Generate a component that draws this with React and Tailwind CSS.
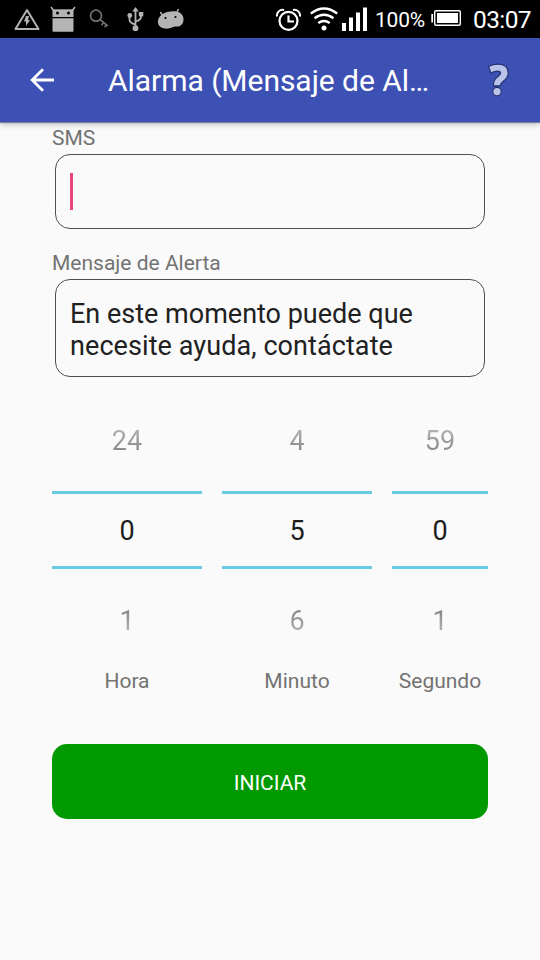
import React from "react";

function StatusBar() {
  return (
    <div className="flex h-[38px] shrink-0 items-start bg-black text-white">
      <svg className="ml-[13px] h-[38px] w-7" viewBox="13 0 28 38" fill="none">
        <path d="M27 10 38.500 29H15.500Z" stroke="#b4b4b4" strokeWidth="2" strokeLinejoin="round" />
        <path d="M26 16h3l-1 4h2l-4 6v-4.500h-2Z" fill="#b4b4b4" />
      </svg>
      <svg className="ml-2 h-[38px] w-7" viewBox="49 0 28 38" fill="none">
        <path d="m51 7 3 4M75 7l-3 4" stroke="#b4b4b4" strokeWidth="1.500" />
        <path d="M52.500 9.300h21V17h-21Z" fill="#b4b4b4" />
        <path d="M52.500 18.300h21V31a.8.800 0 0 1-.8.800H53.300a.8.800 0 0 1-.8-.8Z" fill="#b4b4b4" />
        <circle cx="57.500" cy="13" r="1.500" fill="#000" />
        <circle cx="68.500" cy="13" r="1.500" fill="#000" />
      </svg>
      <svg className="ml-2.5 h-[38px] w-6" viewBox="87 0 24 38" fill="none" stroke="#707070" strokeWidth="1.700">
        <circle cx="96" cy="15.700" r="5.500" />
        <path d="m99.800 19.400 8 6.600M103.500 22.500l-2 2.700M106.500 24.800l-1.800 2.500" />
      </svg>
      <svg className="ml-3.5 h-[38px] w-6" viewBox="125 0 24 38" fill="none" stroke="#b4b4b4" strokeWidth="1.800">
        <path d="M135.500 28V10M135.500 24.500q-6-1.500-6-5V15M135.500 21.500q5.500-1.500 5.500-4.500v-3" />
        <path d="m132.300 11.500 3.200-4.500 3.200 4.500Z" fill="#b4b4b4" stroke="none" />
        <circle cx="129.800" cy="15.500" r="2.400" fill="#b4b4b4" stroke="none" />
        <path d="M138.800 12h4.500v4.300h-4.500Z" fill="#b4b4b4" stroke="none" />
        <circle cx="135.500" cy="28.200" r="2.900" fill="#b4b4b4" stroke="none" />
      </svg>
      <svg className="ml-1.5 h-[38px] w-[30px]" viewBox="155 0 30 38" fill="none">
        <path d="m160.300 12 2.500 4M178.500 9l-2 4.500" stroke="#b4b4b4" strokeWidth="1.500" />
        <path d="M162 14.500c4-3 11-4 15.500-2.800 4 1 6 4.200 6 8 0 4.300-3 7-7 6.900-2 0-3 .2-4.500 1-3.500 1.600-8.500 1.400-11.500-.6-3.200-2.300-3-6.500-1.500-9.200.7-1.300 1.700-2.500 3-3.300Z" fill="#b4b4b4" />
        <circle cx="165.500" cy="18" r="1.100" fill="#000" />
        <circle cx="175.500" cy="17" r="1.100" fill="#000" />
      </svg>
      <svg className="ml-[90px] h-[38px] w-[27px]" viewBox="275 0 27 38" fill="none" stroke="#fff" strokeWidth="2.200">
        <circle cx="288.500" cy="20.800" r="9" />
        <path d="M288.500 15.500v6h5.500" />
        <path d="M277 16.500c-.7-4 3-7.500 7-6.500M300 16.500c.7-4-3-7.500-7-6.500" strokeWidth="1.900" />
      </svg>
      <svg className="ml-[7px] h-[38px] w-[30px]" viewBox="309 0 30 38" fill="none" stroke="#fff" strokeWidth="2.300">
        <path d="M310.800 13.500q13.200-10 26.400 0M314.500 18.300q9.500-7 19 0M318.300 23q5.700-4 11.400 0" />
        <circle cx="324" cy="28" r="2.500" fill="#fff" stroke="none" />
      </svg>
      <svg className="ml-[3px] h-[38px] w-[26px]" viewBox="342 0 26 38" fill="#fff">
        <path d="M342 23h4v8h-4ZM349 17.500h4V31h-4ZM356 12.500h4V31h-4ZM363 7.500h4V31h-4Z" />
      </svg>
      <span className="ml-[7px] w-[52px] whitespace-nowrap text-[21px] leading-[40px] tracking-[-0.2px]">100%</span>
      <svg className="ml-[3px] h-[38px] w-8" viewBox="430 0 32 38" fill="none">
        <path d="M431.300 14h1.700v8.500h-1.700Z" fill="#fff" />
        <rect x="434.700" y="10.700" width="25.600" height="14.600" rx="1.200" stroke="#fff" strokeWidth="1.400" />
        <path d="M437 13h21v10h-21Z" fill="#fff" />
      </svg>
      <span className="ml-[11px] whitespace-nowrap text-[24.5px] leading-[40px] tracking-[-0.6px]">03:07</span>
    </div>
  );
}

function Header() {
  return (
    <header className="z-10 flex h-[84px] shrink-0 items-center bg-[#3d51b4] text-white shadow-[0_1px_1px_#7b83a0,0_3px_6px_rgba(0,0,0,0.2)]">
      <svg className="ml-[29px] h-7 w-7" viewBox="0 0 28 28" fill="none" stroke="#fff" strokeWidth="2.800">
        <path d="M25 14H3.500M14 3.200 3.200 14 14 24.800" />
      </svg>
      <h1 className="ml-[51px] w-[340px] whitespace-nowrap pt-0.5 text-[30px] leading-9 tracking-[-0.04px]">Alarma (Mensaje de Al…</h1>
      <svg className="ml-[38px] h-9 w-6" viewBox="486 62 24 36" fill="#bcc3ea" stroke="#27336f" strokeWidth="1.200">
        <path d="M488.600 66.600c3-1.700 6.400-2.500 9.700-2.400 6.200.1 9.900 3.400 9.900 8.700 0 4.200-2.200 6.400-5.200 8.500-2.300 1.600-2.700 2.300-2.700 4.400h-6.900c-.2-4.600.9-6.600 4-8.800 2.200-1.600 3.200-2.300 3.200-3.700 0-2.900-4.700-2.800-9.700-.3Z" />
        <circle cx="497" cy="91.600" r="4.300" />
      </svg>
    </header>
  );
}

const pickers = [
  { label: "Hora", values: ["24", "0", "1"], width: "w-[150px]" },
  { label: "Minuto", values: ["4", "5", "6"], width: "w-[150px]" },
  { label: "Segundo", values: ["59", "0", "1"], width: "w-24" },
];

function Picker({ label, values, width }) {
  return (
    <div className={`flex flex-col text-center ${width}`}>
      <div className="h-24 bg-gradient-to-b from-[#c4c4c4] from-[25%] to-[#7b7b7b] to-[65%] bg-clip-text text-[27px] leading-[90px] text-transparent">
        {values[0]}
      </div>
      <div className="-my-[1px] h-[78px] border-y-[3px] border-[#68cbe1] text-[27px] leading-[75px] text-[#1d1d1d]">
        {values[1]}
      </div>
      <div className="h-[90px] bg-gradient-to-b from-[#7b7b7b] from-[40%] to-[#c4c4c4] to-[80%] bg-clip-text text-[27px] leading-[107px] text-transparent">
        {values[2]}
      </div>
      <div className="mt-[11px] text-[21px] leading-[25px] text-[#737373]">{label}</div>
    </div>
  );
}

export default function App() {
  return (
    <div className="flex h-[960px] w-[540px] flex-col overflow-hidden bg-[#fafafa] font-['Roboto',sans-serif]">
      <StatusBar />
      <Header />
      <main className="flex flex-col px-[52px] pt-1">
        <label className="text-[21px] leading-[25px] text-[#737373]">SMS</label>
        <div className="mx-[3px] mt-[3px] flex h-[75px] items-center rounded-[15px] border border-[#505050] pl-3.5">
          <span className="h-[37px] w-[3px] bg-[#e84580]" />
        </div>
        <label className="mt-[22px] text-[21px] leading-[25px] text-[#737373]">Mensaje de Alerta</label>
        <div className="mx-[3px] mt-[3px] flex h-[98px] flex-col justify-center rounded-[15px] border border-[#505050] pl-3.5 pt-[3px] text-[27px] leading-8 text-[#212121]">
          <span className="whitespace-nowrap">En este momento puede que</span>
          <span className="whitespace-nowrap tracking-[0.08px]">necesite ayuda, contáctate</span>
        </div>
        <section className="mt-[19px] flex gap-5">
          {pickers.map((p) => (
            <Picker key={p.label} {...p} />
          ))}
        </section>
        <button className="mt-[50px] h-[75px] rounded-[15px] bg-[#009900] pt-1 text-[21px] text-white">INICIAR</button>
      </main>
    </div>
  );
}
